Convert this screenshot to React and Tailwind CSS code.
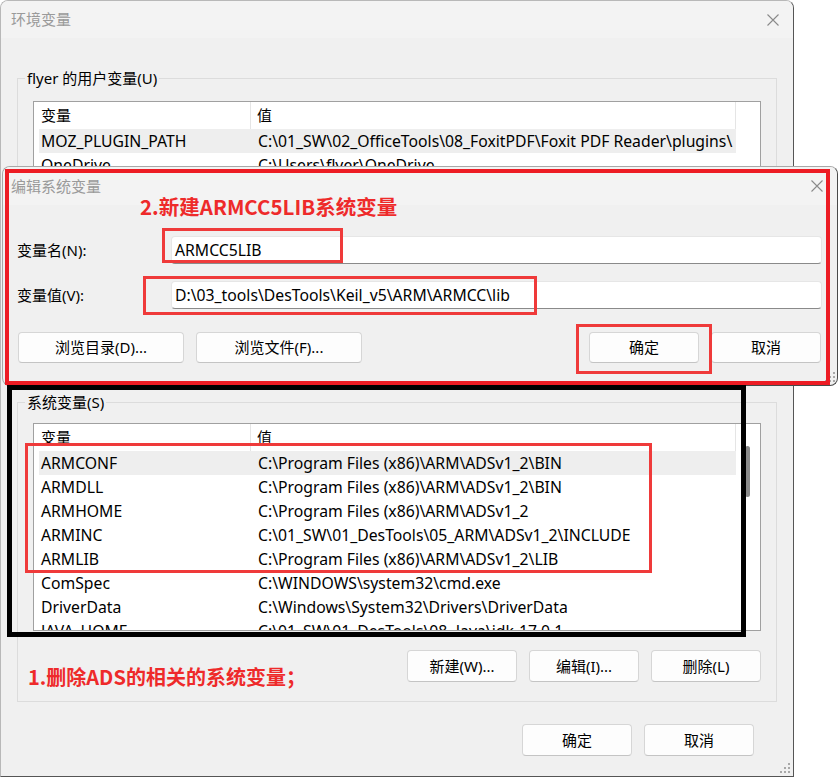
import React from "react";

const userRows = [
  ["MOZ_PLUGIN_PATH", "C:\\01_SW\\02_OfficeTools\\08_FoxitPDF\\Foxit PDF Reader\\plugins\\"],
  ["OneDrive", "C:\\Users\\flyer\\OneDrive"],
];

const systemRows = [
  ["ARMCONF", "C:\\Program Files (x86)\\ARM\\ADSv1_2\\BIN"],
  ["ARMDLL", "C:\\Program Files (x86)\\ARM\\ADSv1_2\\BIN"],
  ["ARMHOME", "C:\\Program Files (x86)\\ARM\\ADSv1_2"],
  ["ARMINC", "C:\\01_SW\\01_DesTools\\05_ARM\\ADSv1_2\\INCLUDE"],
  ["ARMLIB", "C:\\Program Files (x86)\\ARM\\ADSv1_2\\LIB"],
  ["ComSpec", "C:\\WINDOWS\\system32\\cmd.exe"],
  ["DriverData", "C:\\Windows\\System32\\Drivers\\DriverData"],
  ["JAVA_HOME", "C:\\01_SW\\01_DesTools\\08_Java\\jdk-17.0.1"],
];

const CloseIcon = () => (
  <svg width="12" height="12" viewBox="0 0 12 12">
    <path d="M0.5 0.5 L11.5 11.5 M11.5 0.5 L0.5 11.5" stroke="#8a8a8a" strokeWidth="1.1" fill="none" />
  </svg>
);

const Grip = () => (
  <svg width="11" height="11" viewBox="0 0 11 11">
    <rect x="8" y="0" width="2" height="2" fill="#a8a8a8" />
    <rect x="4" y="4" width="2" height="2" fill="#a8a8a8" />
    <rect x="8" y="4" width="2" height="2" fill="#a8a8a8" />
    <rect x="0" y="8" width="2" height="2" fill="#a8a8a8" />
    <rect x="4" y="8" width="2" height="2" fill="#a8a8a8" />
    <rect x="8" y="8" width="2" height="2" fill="#a8a8a8" />
  </svg>
);

const WinButton = ({ children, w = "w-[110px]", h = "h-[32px]" }) => (
  <div
    className={`${w} ${h} shrink-0 flex items-center justify-center rounded-[4px] bg-[#fdfdfd] border border-[#d6d6d6] border-b-[#c4c4c4] text-black`}
  >
    {children}
  </div>
);

const VarList = ({ rows, height, thumb }) => (
  <div className={`flex bg-white border border-[#a0a0a0] ${height} overflow-hidden`}>
    <div className="flex-1 min-w-0 pl-[5px] flex flex-col">
      <div className="flex h-[27px] shrink-0">
        <div className="w-[212px] flex items-center pl-[2px] border-r border-[#e5e5e5]">变量</div>
        <div className="flex-1 flex items-center pl-[6px] border-r border-[#e5e5e5]">值</div>
      </div>
      {rows.map(([name, value], i) => (
        <div
          key={name}
          className={`flex h-[24px] shrink-0 items-center pt-[2px] text-[15.75px] ${i === 0 ? "bg-[#eeeeee]" : ""}`}
        >
          <div className="w-[212px] pl-[2px] whitespace-nowrap">{name}</div>
          <div className="flex-1 min-w-0 pl-[7px] whitespace-nowrap overflow-hidden">{value}</div>
        </div>
      ))}
    </div>
    <div className="w-[24px] shrink-0">
      {thumb && <div className="ml-[9px] mt-[22px] w-[5px] h-[51px] rounded-full bg-[#8a8a8a]" />}
    </div>
  </div>
);

export default function App() {
  return (
    <div className="relative w-[839px] h-[777px] bg-white overflow-hidden text-[15px] text-black font-['Noto_Sans','Noto_Sans_CJK_SC',sans-serif]">
      {/* 环境变量 main window */}
      <div className="relative w-[794px] h-[777px] flex flex-col bg-[#f0f0f0] border border-[#b8b8b8] border-r-[#555555] border-b-[#555555] rounded-t-[8px] overflow-hidden">
        <div className="h-[37px] shrink-0 bg-[#f3f3f3] flex items-center justify-between pl-[10px] pr-[14px]">
          <span className="text-[#9a9a9a]">环境变量</span>
          <CloseIcon />
        </div>

        <div className="flex flex-col px-[16px]">
          <fieldset className="mt-[30px] p-0 border border-[#dcdcdc]">
            <legend className="ml-[7px] px-[2px] leading-[20px] h-[20px]">flyer 的用户变量(U)</legend>
            <div className="px-[15px] pt-[13px] pb-[30px]">
              <VarList rows={userRows} height="h-[200px]" />
            </div>
          </fieldset>

          <fieldset className="mt-[60px] p-0 border border-[#dcdcdc]">
            <legend className="ml-[7px] px-[2px] leading-[20px] h-[20px]">系统变量(S)</legend>
            <div className="px-[15px] pt-[11px] pb-[19px]">
              <VarList rows={systemRows} height="h-[208px]" thumb />
              <div className="mt-[19px] flex justify-end gap-[12px]">
                <WinButton>新建(W)...</WinButton>
                <WinButton>编辑(I)...</WinButton>
                <WinButton>删除(L)</WinButton>
              </div>
            </div>
          </fieldset>

          <div className="mt-[22px] pr-[23px] flex justify-end gap-[12px]">
            <WinButton>确定</WinButton>
            <WinButton>取消</WinButton>
          </div>
        </div>

        <div className="absolute right-[2px] bottom-[2px]">
          <Grip />
        </div>
      </div>

      {/* 编辑系统变量 dialog */}
      <div className="absolute left-[2px] top-[166px] w-[836px] h-[220px] flex flex-col bg-[#f0f0f0] border border-[#a8a8a8] border-r-[#4a4a4a] border-b-[#4a4a4a] rounded-[8px] overflow-hidden">
        <div className="h-[38px] shrink-0 bg-[#f3f3f3] flex items-center justify-between pl-[8px] pr-[14px]">
          <span className="text-[#9a9a9a]">编辑系统变量</span>
          <CloseIcon />
        </div>
        <div className="flex flex-col pl-[14px] pr-[15px]">
          <div className="mt-[31px] flex items-center">
            <div className="w-[154px] shrink-0">变量名(N):</div>
            <div className="flex-1 h-[28px] flex items-center pl-[3px] pt-[1px] text-[15.75px] bg-white rounded-[4px] border border-[#e6e6e6] border-b-[#8a8a8a]">
              ARMCC5LIB
            </div>
          </div>
          <div className="mt-[17px] flex items-center">
            <div className="w-[154px] shrink-0">变量值(V):</div>
            <div className="flex-1 h-[28px] flex items-center pl-[3px] pt-[1px] text-[15.75px] bg-white rounded-[4px] border border-[#e6e6e6] border-b-[#8a8a8a]">
              D:\03_tools\DesTools\Keil_v5\ARM\ARMCC\lib
            </div>
          </div>
          <div className="mt-[23px] pl-[1px] pr-[1px] flex justify-between">
            <div className="flex gap-[12px]">
              <WinButton w="w-[166px]" h="h-[31px]">浏览目录(D)...</WinButton>
              <WinButton w="w-[166px]" h="h-[31px]">浏览文件(F)...</WinButton>
            </div>
            <div className="flex gap-[12px]">
              <WinButton h="h-[31px]">确定</WinButton>
              <WinButton h="h-[31px]">取消</WinButton>
            </div>
          </div>
        </div>
        <div className="absolute right-[1px] bottom-[2px]">
          <Grip />
        </div>
      </div>

      {/* annotations */}
      <div className="absolute left-[5px] top-[169px] w-[825px] h-[216px] border-4 border-[#ed1c24]" />
      <div className="absolute left-[140px] top-[196px] leading-[20px] text-[20.5px] font-bold text-[#ee2a2a] whitespace-nowrap font-['Noto_Sans_CJK_SC',sans-serif]">
        2.新建ARMCC5LIB系统变量
      </div>
      <div className="absolute left-[162px] top-[228px] w-[181px] h-[35px] border-[3px] border-[#ef3a3a]" />
      <div className="absolute left-[143px] top-[276px] w-[394px] h-[39px] border-[3px] border-[#ef3a3a]" />
      <div className="absolute left-[576px] top-[324px] w-[136px] h-[50px] border-[3px] border-[#ef3a3a]" />
      <div className="absolute left-[7px] top-[385px] w-[739px] h-[252px] border-[5px] border-black" />
      <div className="absolute left-[25px] top-[443px] w-[627px] h-[130px] border-[3px] border-[#ef3a3a]" />
      <div className="absolute left-[28px] top-[667px] leading-[20px] text-[20px] font-bold text-[#ee2a2a] whitespace-nowrap font-['Noto_Sans_CJK_SC',sans-serif]">
        1.删除ADS的相关的系统变量；
      </div>
    </div>
  );
}
